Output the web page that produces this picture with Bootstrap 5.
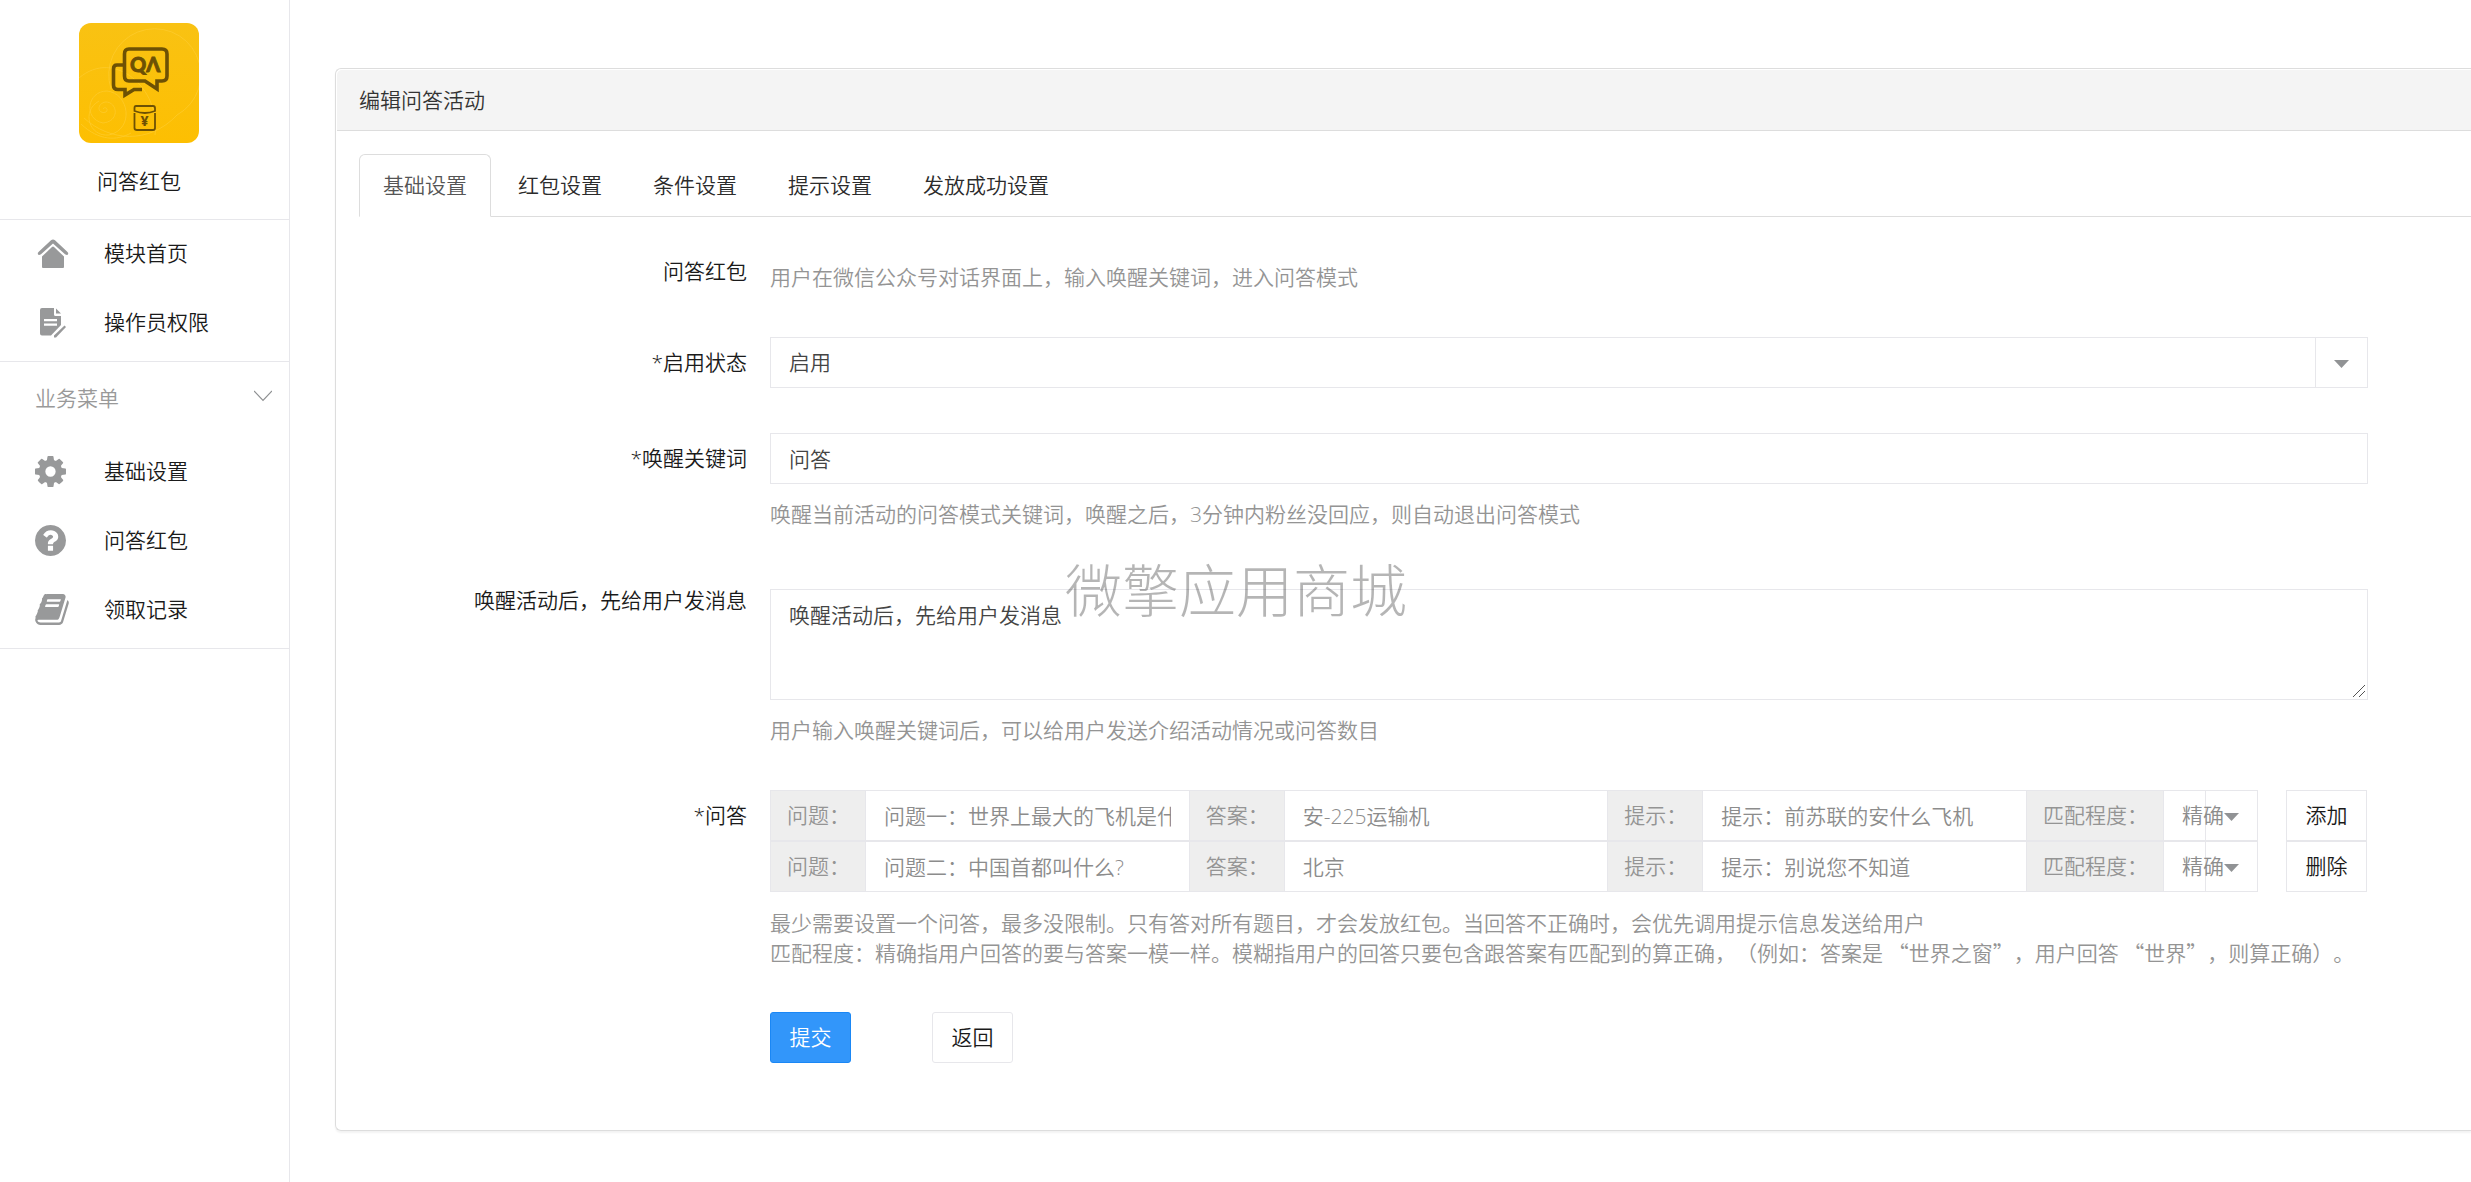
<!DOCTYPE html>
<html lang="zh-CN">
<head>
<meta charset="utf-8">
<meta name="viewport" content="width=device-width, initial-scale=1">
<title>编辑问答活动</title>
<link href="https://cdn.jsdelivr.net/npm/bootstrap@5.3.0/dist/css/bootstrap.min.css" rel="stylesheet">
<style>
body{font-family:"Open Sans","Noto Sans CJK SC",sans-serif;font-weight:350;font-size:21px;line-height:30px;color:#1a1a1a;background:#fff}
.side{flex:0 0 290px;border-right:1px solid #e7e7eb}
.side-block{border-bottom:1px solid #e7e7eb}
.side-menu{padding-bottom:3px}
.brand{padding:23px 11px 23px 0}
.brand svg{width:120px;height:120px;border-radius:12px;margin-bottom:23px}
.side-link{display:flex;align-items:center;height:69px;padding:0 0 2px 35px;color:#1a1a1a;text-decoration:none}
.side-link svg{width:34px;height:31px;fill:#98999a}
.side-link span{margin-left:35px;line-height:30px;padding-bottom:2px}
.side-toggle{width:100%;height:76px;padding:0 17px 0 35px;border:0;background:none;color:#999;font-weight:350}
.main{min-width:0;padding:68px 0 50px 45px}
.panel{border:1px solid #ddd;border-right:0;border-radius:6px 0 0 6px;box-shadow:0 2px 2px rgba(0,0,0,.05)}
.panel-head{margin:1px 0 0 1px;padding:15px 22px 15px;background:#f4f4f4;border-bottom:1px solid #ddd;color:#333;border-radius:5px 0 0 0;font-size:21px;font-weight:350;line-height:30px}
.panel-main{padding:23px 0 67px 23px}
.nav-tabs{border-color:#ddd}
.nav-tabs .nav-link{padding:15px 23px 16px;margin-right:3px;color:#2b2b2b;border-radius:6px 6px 0 0}
.nav-tabs .nav-link.active{color:#555;border-color:#ddd #ddd #fff}
.form-area{padding:37px 103px 0 0}
.f-row{display:flex;gap:23px;margin-bottom:45px}
.f-label{flex:0 0 388px;text-align:right;line-height:30px;padding-top:2px}
.f-field{flex:1 1 0;min-width:0}
.f-label.mid{padding-top:10px}
.f-row.tall{padding-top:15px}
.f-label.low{padding-top:0;margin-top:-4px}
.form-control,.form-select{height:51px;border:1px solid #e7e7eb;border-radius:0;padding:0 18px 2px;font-size:21px;line-height:30px;font-weight:350;color:#444}
textarea.form-control{height:111px;min-height:111px;padding-top:10px}
textarea::-webkit-resizer{background:url("data:image/svg+xml,%3Csvg xmlns='http://www.w3.org/2000/svg' width='15' height='15'%3E%3Cpath d='M1 13L13 1M7 13L13 7' stroke='%23555'/%3E%3C/svg%3E") no-repeat right bottom}
.form-select{background:url("data:image/svg+xml,%3Csvg xmlns='http://www.w3.org/2000/svg' width='52' height='49'%3E%3Cpath d='M.5 0v49' stroke='%23e7e7eb'/%3E%3Cpath d='M19 22h15l-7.500 8z' fill='%23919395'/%3E%3C/svg%3E") no-repeat right center #fff}
.tip{color:#949494;padding-top:15px;line-height:30px}
.full-punct{font-family:"Noto Sans CJK SC",sans-serif;text-spacing-trim:space-all}
.qa .form-control,.qa .form-select{color:#8c8c8c;min-width:0}
.qa .form-select{flex:0 0 95px;padding-right:0}
.input-group-text{height:51px;border:1px solid #e7e7eb;border-radius:0;background:#eee;color:#949494;font-size:21px;font-weight:350;padding:0 15px 0 16px}
.act{width:81px;height:51px;padding:0;font-size:21px;font-weight:350;border-radius:3px;border:1px solid #e7e7eb;background:#fff;color:#1a1a1a}
.act.main-act{background:#3296fa;border-color:#1a87f5;color:#fff}
.act.sq{border-radius:0;margin:0 1px 0 28px}
.acts{display:flex;gap:81px}
.watermark{position:absolute;left:43.1%;top:550px;font-size:57px;font-weight:300;line-height:80px;color:rgba(0,0,0,.29);pointer-events:none;white-space:nowrap}
</style>
</head>
<body>
<div class="d-flex min-vh-100 position-relative overflow-hidden">
  <aside class="side">
    <div class="side-block brand text-center">
      <svg class="d-block mx-auto" viewBox="0 0 120 120" fill="none" role="img" aria-label="问答红包">
        <defs><linearGradient id="gold" x2="0" y2="1"><stop stop-color="#f9c213"/><stop offset="1" stop-color="#fdbf02"/></linearGradient></defs>
        <rect width="120" height="120" fill="url(#gold)"/>
        <g stroke="#ffcf3a" stroke-opacity=".55" stroke-width="1">
          <path d="M32 66A46 46 0 1 1 98 92C70 122 30 118 5 95"/>
          <path d="M0 55C35 25 82 65 76 112"/>
          <path d="M20 78C2 88 10 114 30 112C56 106 50 70 28 68C8 68 4 96 24 100C42 98 38 78 26 79C16 82 20 92 27 89C30 86 26 83 24 86"/>
          <path d="M2 101C20 118 38 118 52 110"/>
        </g>
        <g stroke="#6d5104" stroke-width="3.600">
          <path d="M50 26H83Q88 26 88 31V53Q88 58 83 58H78V66L66 58H50Q45.500 58 45.500 53V31Q45.500 26 50 26Z"/>
          <path d="M44 42H38Q34.500 42 34.500 46V62Q34.500 66.500 39 66.500H46V72L55 66.500H63"/>
        </g>
        <text x="51" y="49" font-family="Lato,sans-serif" font-weight="900" font-size="20" fill="#6d5104" stroke="#6d5104" stroke-width=".8">QΛ</text>
        <g stroke="#6d5104" stroke-width="1.800">
          <path d="M57 83H74Q76 83 76 85V88Q66 92 55.500 88V85Q55.500 83 57 83Z"/>
          <path d="M55.500 90V105Q55.500 107 58 107H74Q76 107 76 105V90"/>
        </g>
        <text x="65.500" y="103" text-anchor="middle" font-family="Noto Sans,sans-serif" font-weight="800" font-size="14" fill="#6d5104">¥</text>
      </svg>
      <div>问答红包</div>
    </div>
    <nav class="side-block side-menu">
      <a class="side-link" href="#"><svg viewBox="0 0 34 31"><path d="M3 16.500Q2 15 4 13.600L16 2.200Q18 .8 20 2.200L32 13.600Q34 15 33 16.500Q32 17.500 30 16.200L18 5.400L6 16.200Q4 17.500 3 16.500Z"/><path d="M7 18.500L17 9Q18 8.200 19 9L29 18.500V29Q29 30 28 30H8Q7 30 7 29Z"/></svg><span>模块首页</span></a>
      <a class="side-link" href="#"><svg viewBox="0 0 34 31"><path fill-rule="evenodd" d="M7 1H19V7.500Q19 9 20.500 9H26V18L16 28.500H7Q5 28.500 5 26.500V3Q5 1 7 1ZM9 12V14.200H22V12ZM9 16.600V18.800H22V16.600Z"/><path d="M21 1.500L26 6.500H21Z"/><path d="M29.500 18.500L31 20L21 30.500H19V28.500Z"/></svg><span>操作员权限</span></a>
    </nav>
    <div class="side-block side-menu">
      <button class="side-toggle d-flex align-items-center justify-content-between" type="button"><span class="pb-1">业务菜单</span><svg class="mb-2" width="18" height="12" viewBox="0 0 18 12" fill="none" stroke="#8e9092" stroke-width="1.200"><path d="M0 1L9 10.500L18 1"/></svg></button>
      <a class="side-link" href="#"><svg viewBox="0 128 1686 1536" preserveAspectRatio="xMinYMid"><path d="M1024 896q0-106-75-181t-181-75-181 75-75 181 75 181 181 75 181-75 75-181zm512-109v222q0 12-8 23t-20 13l-185 28q-19 54-39 91 35 50 107 138 10 12 10 25t-9 23q-27 37-99 108t-94 71q-12 0-26-9l-138-108q-44 23-91 38-16 136-29 186-7 28-36 28h-222q-14 0-24.500-8.500t-11.500-21.500l-28-184q-49-16-90-37l-141 107q-10 9-25 9-14 0-25-11-126-114-165-168-7-10-7-23 0-12 8-23 15-21 51-66.500t54-70.500q-27-50-41-99l-183-27q-13-2-21-12.500t-8-23.500v-222q0-12 8-23t19-13l186-28q14-46 39-92-40-57-107-138-10-12-10-24 0-10 9-23 26-36 98.500-107.500t94.500-71.500q13 0 26 10l138 107q44-23 91-38 16-136 29-186 7-28 36-28h222q14 0 24.500 8.500t11.500 21.500l28 184q49 16 90 37l142-107q9-9 24-9 13 0 25 10 129 119 165 170 7 8 7 22 0 12-8 23-15 21-51 66.500t-54 70.500q26 50 41 98l183 28q13 2 21 12.500t8 23.500z"/></svg><span>基础设置</span></a>
      <a class="side-link" href="#"><svg viewBox="128 128 1686 1536" preserveAspectRatio="xMinYMid"><path d="M1024 1376v-192q0-14-9-23t-23-9h-192q-14 0-23 9t-9 23v192q0 14 9 23t23 9h192q14 0 23-9t9-23zm256-672q0-88-55.500-163t-138.500-116-170-41q-243 0-371 213-15 24 8 42l132 100q7 6 19 6 16 0 25-12 53-68 86-92 34-24 86-24 48 0 85.500 26t37.500 59q0 38-20 61t-68 45q-63 28-115.500 86.500t-52.500 125.500v36q0 14 9 23t23 9h192q14 0 23-9t9-23q0-19 21.500-49.500t54.500-49.500q32-18 49-28.500t46-35 44.500-48 28-60.500 12.500-81zm384 192q0 209-103 385.500t-279.500 279.500-385.500 103-385.500-103-279.500-279.500-103-385.500 103-385.500 279.500-279.500 385.500-103 385.500 103 279.500 279.500 103 385.500z"/></svg><span>问答红包</span></a>
      <a class="side-link" href="#"><svg viewBox="64 128 1664 1536"><path d="M1703 478q40 57 18 129l-275 906q-19 64-76.500 107.500t-122.500 43.500h-923q-77 0-148.500-53.500t-99.500-131.500q-24-67-2-127 0-4 3-27t4-37q1-8-3-21.500t-3-19.500q2-11 8-21t16.500-23.500 16.500-23.500q23-38 45-91.500t30-91.500q3-10 .5-30t-.5-28q3-11 17-28t17-23q21-36 42-92t25-90q1-9-2.500-32t.5-28q4-13 22-30.500t22-22.500q19-26 42.500-84.500t27.500-96.500q1-8-3-25.500t-2-26.500q2-8 9-18t18-23 17-21q8-12 16.500-30.500t15-35 16-36 19.500-32 26.500-23.500 36-11.500 47.500 5.500l-1 3q38-9 51-9h761q74 0 114 56t18 130l-274 906q-36 119-71.500 153.500t-128.500 34.500h-869q-27 0-38 15-11 16-1 43 24 70 144 70h923q29 0 56-15.500t35-41.500l300-987q7-22 5-57 38 15 59 43zm-1064 2q-4 13 2 22.500t20 9.500h608q13 0 25.500-9.500t16.500-22.500l21-64q4-13-2-22.500t-20-9.500h-608q-13 0-25.500 9.500t-16.500 22.500zm-83 256q-4 13 2 22.500t20 9.500h608q13 0 25.500-9.500t16.500-22.500l21-64q4-13-2-22.500t-20-9.500h-608q-13 0-25.500 9.500t-16.500 22.500z"/></svg><span>领取记录</span></a>
    </div>
  </aside>

  <main class="main flex-grow-1">
    <section class="panel">
      <h1 class="panel-head">编辑问答活动</h1>
      <div class="panel-main">
        <ul class="nav nav-tabs">
          <li class="nav-item"><a class="nav-link active" href="#">基础设置</a></li>
          <li class="nav-item"><a class="nav-link" href="#">红包设置</a></li>
          <li class="nav-item"><a class="nav-link" href="#">条件设置</a></li>
          <li class="nav-item"><a class="nav-link" href="#">提示设置</a></li>
          <li class="nav-item"><a class="nav-link" href="#">发放成功设置</a></li>
        </ul>
        <form class="form-area">
          <div class="f-row">
            <div class="f-label">问答红包</div>
            <div class="f-field tip pt-2">用户在微信公众号对话界面上，输入唤醒关键词，进入问答模式</div>
          </div>
          <div class="f-row">
            <label class="f-label mid" for="state">*启用状态</label>
            <div class="f-field"><select class="form-select" id="state"><option>启用</option></select></div>
          </div>
          <div class="f-row">
            <label class="f-label mid" for="word">*唤醒关键词</label>
            <div class="f-field"><input class="form-control" id="word" type="text" value="问答"><div class="tip">唤醒当前活动的问答模式关键词，唤醒之后，3分钟内粉丝没回应，则自动退出问答模式</div></div>
          </div>
          <div class="f-row tall">
            <label class="f-label low" for="msg">唤醒活动后，先给用户发消息</label>
            <div class="f-field"><textarea class="form-control" id="msg">唤醒活动后，先给用户发消息</textarea><div class="tip">用户输入唤醒关键词后，可以给用户发送介绍活动情况或问答数目</div></div>
          </div>
          <div class="f-row">
            <div class="f-label mid">*问答</div>
            <div class="f-field">
              <div class="qa d-flex">
                <div class="input-group flex-nowrap">
                  <label class="input-group-text" for="q1">问题：</label><input class="form-control" id="q1" type="text" value="问题一：世界上最大的飞机是什么？">
                  <label class="input-group-text" for="a1">答案：</label><input class="form-control" id="a1" type="text" value="安-225运输机">
                  <label class="input-group-text" for="t1">提示：</label><input class="form-control" id="t1" type="text" value="提示：前苏联的安什么飞机">
                  <label class="input-group-text" for="m1">匹配程度：</label><select class="form-select" id="m1"><option>精确</option></select>
                </div>
                <button class="btn act sq flex-shrink-0" type="button">添加</button>
              </div>
              <div class="qa d-flex">
                <div class="input-group flex-nowrap">
                  <label class="input-group-text" for="q2">问题：</label><input class="form-control" id="q2" type="text" value="问题二：中国首都叫什么?">
                  <label class="input-group-text" for="a2">答案：</label><input class="form-control" id="a2" type="text" value="北京">
                  <label class="input-group-text" for="t2">提示：</label><input class="form-control" id="t2" type="text" value="提示：别说您不知道">
                  <label class="input-group-text" for="m2">匹配程度：</label><select class="form-select" id="m2"><option>精确</option></select>
                </div>
                <button class="btn act sq flex-shrink-0" type="button">删除</button>
              </div>
              <div class="tip full-punct">最少需要设置一个问答，最多没限制。只有答对所有题目，才会发放红包。当回答不正确时，会优先调用提示信息发送给用户<br>匹配程度：精确指用户回答的要与答案一模一样。模糊指用户的回答只要包含跟答案有匹配到的算正确，（例如：答案是 “世界之窗”，用户回答 “世界”，则算正确）。</div>
            </div>
          </div>
          <div class="f-row mb-0">
            <div class="f-label"></div>
            <div class="f-field acts"><button class="btn act main-act" type="submit">提交</button><button class="btn act" type="button">返回</button></div>
          </div>
        </form>
      </div>
    </section>
  </main>
  <div class="watermark">微擎应用商城</div>
</div>
<script src="https://cdn.jsdelivr.net/npm/bootstrap@5.3.0/dist/js/bootstrap.bundle.min.js"></script>
</body>
</html>
